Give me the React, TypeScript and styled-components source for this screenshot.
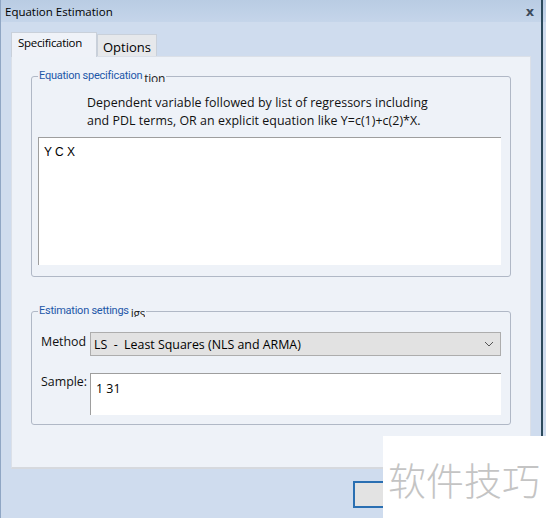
import React from 'react';
import styled, { createGlobalStyle } from 'styled-components';

const GlobalStyle = createGlobalStyle`
  html, body {
    margin: 0;
    padding: 0;
    background: #cfdcee;
  }
  body {
    font-family: 'Open Sans', 'Noto Sans', sans-serif;
    color: #000000;
  }
`;

const Window = styled.div`
  position: relative;
  width: 546px;
  height: 518px;
  overflow: hidden;
  background: #cfdcee;
  border-left: 1px solid #8fa6c4;
  box-sizing: border-box;
  display: flex;
  flex-direction: column;
`;

const RightEdge = styled.div`
  position: absolute;
  top: 0;
  right: 3px;
  width: 2px;
  height: 100%;
  background: #2c4a5c;
`;

const TitleBar = styled.div`
  height: 22px;
  display: flex;
  align-items: center;
  justify-content: space-between;
  padding: 0 0 0 4px;
  background: linear-gradient(#b9cce3, #c5d5ea);
  font-size: 11.5px;
  font-family: 'Open Sans', sans-serif;
`;

const CloseX = styled.span`
  width: 20px;
  margin-right: 6px;
  text-align: center;
  font-family: 'DejaVu Sans', sans-serif;
  font-weight: bold;
  font-size: 13px;
  color: #3c4a5c;
`;

const Body = styled.div`
  padding: 10px 15px 0 10px;
  display: flex;
  flex-direction: column;
`;

const TabRow = styled.div`
  display: flex;
  align-items: flex-end;
  height: 24px;
`;

const Tab = styled.div<{ active?: boolean }>`
  box-sizing: border-box;
  height: ${p => (p.active ? '25px' : '22px')};
  padding: ${p => (p.active ? '2px 14px 0 6px' : '2px 5px 0 5px')};
  border: 1px solid #c9d0da;
  border-bottom: none;
  background: ${p => (p.active ? '#eff2f8' : '#e6e8eb')};
  font-size: ${p => (p.active ? '11.5px' : '13px')};
  letter-spacing: ${p => (p.active ? '-0.3px' : '0')};
  display: flex;
  align-items: ${p => (p.active ? 'flex-start' : 'center')};
  margin-bottom: ${p => (p.active ? '-1px' : '0')};
  position: relative;
  z-index: ${p => (p.active ? 1 : 0)};
`;

const Panel = styled.div`
  height: 413px;
  box-sizing: border-box;
  background: #eef2f8;
  border: 1px solid #dbe0e8;
  border-bottom: 2px solid #d6d9de;
  padding: 13px 19px 0 19px;
  display: flex;
  flex-direction: column;
`;

const Group = styled.fieldset<{ h: number; gapTop?: number }>`
  margin: ${p => p.gapTop ?? 0}px 0 0 0;
  height: ${p => p.h}px;
  box-sizing: border-box;
  border: 1px solid #b0b8c6;
  border-radius: 3px;
  padding: 0 9px 11px 6px;
  min-width: 0;
`;

const Legend = styled.legend`
  padding: 0 1px;
  margin-left: 0;
  font-family: 'Roboto', sans-serif;
  font-size: 11px;
  letter-spacing: -0.25px;
  color: #1d57a8;
  line-height: 12px;
  display: flex;
  align-items: flex-start;
`;

const HiddenTail = styled.span`
  color: #222;
  font-family: 'Open Sans', sans-serif;
  font-size: 12px;
  line-height: 10px;
  margin-top: 4px;
  margin-left: 2px;
  overflow: hidden;
  height: 8px;
`;

const Hint = styled.div`
  margin: 12px 0 0 49px;
  font-size: 12.4px;
  line-height: 18px;
  letter-spacing: 0.05px;
  color: #111;
`;

const TextArea = styled.div`
  margin-top: 7px;
  height: 128px;
  box-sizing: border-box;
  background: #ffffff;
  border-top: 1px solid #9e9e9e;
  border-left: 1px solid #9e9e9e;
  padding: 7px 5px;
  font-family: 'Liberation Sans', Arial, sans-serif;
  font-size: 12px;
`;

const FieldRow = styled.div<{ top: number }>`
  display: flex;
  align-items: flex-start;
  margin-top: ${p => p.top}px;
`;

const FieldLabel = styled.div<{ pad: number }>`
  width: 49px;
  padding-left: 3px;
  padding-top: ${p => p.pad}px;
  font-size: 12.4px;
  color: #111;
`;

const Select = styled.div`
  flex: 1;
  height: 24px;
  box-sizing: border-box;
  background: #e2e2e2;
  border: 1px solid #adadad;
  display: flex;
  align-items: center;
  justify-content: space-between;
  padding: 0 6px 0 3px;
  font-size: 12.4px;
  white-space: pre;
`;

const Input = styled.div`
  flex: 1;
  height: 42px;
  box-sizing: border-box;
  background: #ffffff;
  border-top: 1px solid #9e9e9e;
  border-left: 1px solid #9e9e9e;
  padding: 6px 0 0 5px;
  font-size: 12.4px;
`;

const Footer = styled.div`
  flex: 1;
  position: relative;
`;

const OkButton = styled.div`
  position: absolute;
  left: 352px;
  top: 12px;
  width: 74px;
  height: 27px;
  box-sizing: border-box;
  border: 2px solid #2a6fb2;
  background: #e3e3e3;
`;

const Watermark = styled.div`
  position: absolute;
  left: 382px;
  top: 436px;
  width: 164px;
  height: 82px;
  background: #ffffff;
  display: flex;
  align-items: center;
  justify-content: center;
  padding: 2px 2px 0 0;
  box-sizing: border-box;
  font-family: 'Noto Sans CJK SC', sans-serif;
  font-weight: 300;
  font-size: 38px;
  color: #c4c4c4;
`;

const Chevron = () => (
  <svg width="10" height="6" viewBox="0 0 10 6">
    <path d="M1 1 L5 5 L9 1" fill="none" stroke="#555" strokeWidth="1" />
  </svg>
);

export default function App() {
  return (
    <>
      <GlobalStyle />
      <Window>
        <TitleBar>
          <span>Equation Estimation</span>
          <CloseX>x</CloseX>
        </TitleBar>
        <Body>
          <TabRow>
            <Tab active>Specification</Tab>
            <Tab>Options</Tab>
          </TabRow>
          <Panel>
            <Group h={207}>
              <Legend>
                Equation specification<HiddenTail>tion</HiddenTail>
              </Legend>
              <Hint>
                Dependent variable followed by list of regressors including
                <br />
                and PDL terms, OR an explicit equation like Y=c(1)+c(2)*X.
              </Hint>
              <TextArea>Y C X</TextArea>
            </Group>
            <Group h={120} gapTop={28}>
              <Legend>
                Estimation settings<HiddenTail>igs</HiddenTail>
              </Legend>
              <FieldRow top={15}>
                <FieldLabel pad={1}>Method</FieldLabel>
                <Select>
                  <span>LS  -  Least Squares (NLS and ARMA)</span>
                  <Chevron />
                </Select>
              </FieldRow>
              <FieldRow top={17}>
                <FieldLabel pad={0}>Sample:</FieldLabel>
                <Input>1 31</Input>
              </FieldRow>
            </Group>
          </Panel>
        </Body>
        <Footer>
          <OkButton />
        </Footer>
        <RightEdge />
        <Watermark>软件技巧</Watermark>
      </Window>
    </>
  );
}
